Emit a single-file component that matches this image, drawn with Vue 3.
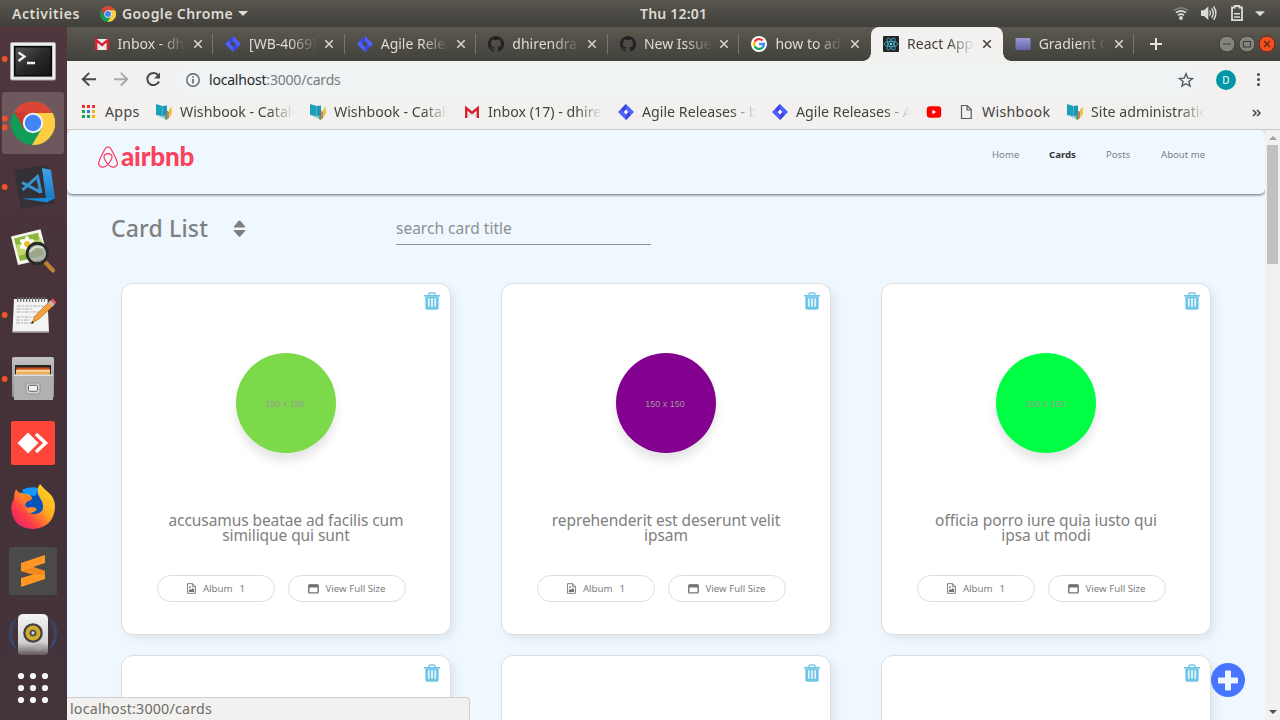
<script setup>
const tabs = [
  { title: 'Inbox - dhirendra', icon: 'gmail' },
  { title: '[WB-4069] Cards', icon: 'jira-tab' },
  { title: 'Agile Releases', icon: 'jira-tab' },
  { title: 'dhirendra/app', icon: 'github' },
  { title: 'New Issue ·', icon: 'github' },
  { title: 'how to add', icon: 'google' },
  { title: 'React App', icon: 'react', active: true },
  { title: 'Gradient Colors', icon: 'gradient' },
]
const bookmarks = [
  { title: 'Apps', icon: 'apps', size: 'apps' },
  { title: 'Wishbook - Catalog', icon: 'wish', size: 'wide' },
  { title: 'Wishbook - Catalog', icon: 'wish', size: 'wide' },
  { title: 'Inbox (17) - dhirendra', icon: 'gmail', size: 'wide' },
  { title: 'Agile Releases - board', icon: 'jira', size: 'wide' },
  { title: 'Agile Releases - Agile', icon: 'jira', size: 'wide' },
  { title: '', icon: 'youtube', size: 'tiny' },
  { title: 'Wishbook', icon: 'file', size: 'mid' },
  { title: 'Site administration', icon: 'wish', size: 'last' },
]
const links = [
  { label: 'Home', cls: 'home' },
  { label: 'Cards', cls: 'current' },
  { label: 'Posts', cls: 'posts' },
  { label: 'About me', cls: 'about' },
]
const cards = [
  { color: '#7bd94a', lines: ['accusamus beatae ad facilis cum', 'similique qui sunt'] },
  { color: '#84008f', lines: ['reprehenderit est deserunt velit', 'ipsam'] },
  { color: '#00ff44', lines: ['officia porro iure quia iusto qui', 'ipsa ut modi'] },
  { color: '#fff', lines: [] },
  { color: '#fff', lines: [] },
  { color: '#fff', lines: [] },
]
const dots = [9, 21, 33]
</script>

<template>
  <div class="desktop">
    <svg class="defs" aria-hidden="true">
      <defs>
        <linearGradient id="steel" x2="0" y2="1"><stop stop-color="#c3c3c3" /><stop offset="1" stop-color="#8e8e8e" /></linearGradient>
        <linearGradient id="screen" x2="1" y2="1"><stop stop-color="#555" /><stop offset=".5" stop-color="#2a2a2a" /><stop offset="1" stop-color="#151515" /></linearGradient>
        <linearGradient id="fox" x1="1" y1="0" x2="0" y2="1"><stop stop-color="#ffe52b" /><stop offset=".4" stop-color="#ffac20" /><stop offset=".7" stop-color="#ff3d45" /><stop offset="1" stop-color="#e31587" /></linearGradient>
        <linearGradient id="speaker" x2="0" y2="1"><stop stop-color="#f5f5f5" /><stop offset=".7" stop-color="#d2d0d0" /><stop offset="1" stop-color="#62565a" /></linearGradient>
        <linearGradient id="lilac" x2="0" y2="1"><stop stop-color="#9a9ad2" /><stop offset="1" stop-color="#6265a8" /></linearGradient>
        <linearGradient id="vs" x2="0" y2="1"><stop stop-color="#3da5ec" /><stop offset="1" stop-color="#1674bd" /></linearGradient>
        <symbol id="chrome" viewBox="0 0 44 44">
          <circle cx="22" cy="22" r="22" fill="#109d58" />
          <path d="M22 22 3 11A22 22 0 0 1 41.5 12H22z" fill="#db4437" />
          <path d="M22 12h19.7A22 22 0 0 1 21 44l10-17z" fill="#ffcd40" />
          <path d="M3 11 13 28 22 12z" fill="#c93c2f" />
          <circle cx="22" cy="22" r="10.2" fill="#f1f1f1" /><circle cx="22" cy="22" r="8.2" fill="#4285f4" />
        </symbol>
        <symbol id="gmail" viewBox="0 0 16 16"><path d="M1 3h14v11H1z" fill="#eee" /><path d="M3 13 8 8l5 5" stroke="#ccc" fill="none" /><path d="M2.2 14V4L8 9l5.800-5v10" fill="none" stroke="#d8232f" stroke-width="2.4" /></symbol>
        <symbol id="jira" viewBox="0 0 16 16"><path d="M8 0 16 8 8 16 0 8z" fill="#4c5fff" /><path d="M8 0v6L5.500 8 3.200 5z" fill="#3f45d8" /><path d="M8 16v-6l2.500-2 2.300 3z" fill="#3f45d8" /><path d="M8 5.600 10.400 8 8 10.400 5.600 8z" fill="#f2f1f0" /></symbol>
        <symbol id="jira-tab" viewBox="0 0 16 16"><path d="M8 0 16 8 8 16 0 8z" fill="#4c5fff" /><path d="M8 0v6L5.500 8 3.200 5z" fill="#3f45d8" /><path d="M8 16v-6l2.500-2 2.300 3z" fill="#3f45d8" /><path d="M8 5.300 10.700 8 8 10.700 5.300 8z" fill="#4a4944" /></symbol>
        <symbol id="github" viewBox="0 0 16 16"><path fill="#222" d="M8 0C3.58 0 0 3.58 0 8c0 3.54 2.29 6.53 5.47 7.59.4.07.55-.17.55-.38v-1.49c-2.01.37-2.53-.49-2.69-.94-.09-.23-.48-.94-.82-1.13-.28-.15-.68-.52-.01-.53.63-.01 1.08.58 1.23.82.72 1.21 1.87.87 2.33.66.07-.52.28-.87.51-1.07-1.78-.2-3.64-.89-3.64-3.95 0-.87.31-1.59.82-2.15-.08-.2-.36-1.02.08-2.12 0 0 .67-.21 2.2.82A7.7 7.7 0 0 1 8 3.86c.68 0 1.36.09 2 .27 1.53-1.04 2.2-.82 2.2-.82.44 1.1.16 1.92.08 2.12.51.56.82 1.27.82 2.15 0 3.07-1.87 3.75-3.65 3.95.29.25.54.73.54 1.48v2.2c0 .21.15.46.55.38A8 8 0 0 0 16 8c0-4.42-3.58-8-8-8z" /></symbol>
        <symbol id="google" viewBox="0 0 16 16"><circle cx="8" cy="8" r="8" fill="#fff" /><g fill="none" stroke-width="2.3"><path d="M11.6 4.5A5 5 0 0 0 3.7 5.6" stroke="#ea2d3b" /><path d="M3.7 5.6a5 5 0 0 0 0 4.8" stroke="#fbbc05" /><path d="M3.7 10.4a5 5 0 0 0 7.6 1.3" stroke="#0fae5b" /><path d="M11.3 11.7A5 5 0 0 0 13 8H8" stroke="#4285f4" /></g></symbol>
        <symbol id="react" viewBox="0 0 16 16"><rect width="16" height="16" rx="1" fill="#222" /><g fill="none" stroke="#45bcd8" stroke-width=".8"><ellipse cx="8" cy="8" rx="6.8" ry="2.6" /><ellipse cx="8" cy="8" rx="6.8" ry="2.6" transform="rotate(60 8 8)" /><ellipse cx="8" cy="8" rx="6.8" ry="2.6" transform="rotate(120 8 8)" /></g><circle cx="8" cy="8" r="1.3" fill="#61dafb" /></symbol>
        <symbol id="gradient" viewBox="0 0 16 16"><rect x=".5" y="2" width="15" height="12" rx="1" fill="url(#lilac)" /></symbol>
        <symbol id="apps" viewBox="0 0 16 16"><g><path fill="#f02b3a" d="M1 1h3v3H1zM6 1h3v3H6zM11 1h3v3h-3z" /><path fill="#13a75b" d="M1 6h3v3H1zM1 11h3v3H1z" /><path fill="#3c6ff7" d="M6 6h3v3H6z" /><path fill="#13a75b" d="M6 11h3v3H6z" /><path fill="#ffb400" d="M11 6h3v3h-3zM11 11h3v3h-3z" /></g></symbol>
        <symbol id="wish" viewBox="0 0 16 16"><path d="M0 0 6.500 2v10.500L0 11z" fill="#1aa0bb" /><path d="M6.500 2 11 1.500V11l-4.500 2z" fill="#2396b2" /><path d="M1.500 11.500 8.500 12 10 15.500z" fill="#8fcbd9" /><path d="M11 6.500 13 8v6l-2.500 2z" fill="#cc7b64" /><path d="M13 6l2.500-3.500L16 9l-2.500 5z" fill="#e6c12e" /><path d="M9 10.500h2V16L9 15z" fill="#49a265" /></symbol>
        <symbol id="youtube" viewBox="0 0 16 16"><rect x=".8" y="2.2" width="14.4" height="11.6" rx="3" fill="#f00" /><path d="M6.4 5.8v4.4L10.2 8z" fill="#fff" /></symbol>
        <symbol id="file" viewBox="0 0 16 16"><path d="M3.5 1.5h5.7l4 4v9H3.5zM9 1.5V6h4.2" fill="none" stroke="#5b5b5b" stroke-width="1.2" /></symbol>
        <symbol id="trash" viewBox="0 0 16 18"><path d="M5 3V2Q5 1 6 1h4q1 0 1 1v1" fill="none" stroke="#7ac8e8" stroke-width="1.4" /><path d="M0 3h16v1.6H0z" fill="#6fc3e5" /><path d="M1.300 4.500h13.400V16q0 1.800-1.800 1.800H3.100q-1.800 0-1.800-1.800z" fill="#71c6e8" /><path d="M4.200 6.200h1.300v8.600H4.200zM7.300 6.200h1.400v8.600H7.300zM10.500 6.200h1.300v8.600h-1.300z" fill="#fff" /></symbol>
      </defs>
    </svg>

    <header class="topbar">
      <span class="activities">Activities</span>
      <svg class="mini"><use href="#chrome" /></svg>
      <span class="appname">Google Chrome</span>
      <i class="caret"></i>
      <span class="clock">Thu 12:01</span>
      <svg class="status" viewBox="0 0 100 27">
        <g fill="none" stroke="#dadad6" stroke-width="1.7">
          <path d="M4 10.2q7-4.8 14 0" opacity=".35" /><path d="M6 12.6q5-3.4 10 0" /><path d="M8 15.2q3-2.2 6 0" />
        </g>
        <circle cx="11" cy="18" r="1.9" fill="#dadad6" />
        <path d="M31 10.2h3l4.3-3.8v13.5L34 16h-3z" fill="#dadad6" />
        <g fill="none" stroke="#dadad6" stroke-width="1.4"><path d="M39.7 10.5q1.6 2.6 0 5.2M41.7 8.5q3.2 4.6 0 9.2M43.6 6.5q4.6 6.7 0 13.3" /></g>
        <path d="M64.7 7.5H62v12.7h10V7.5h-2.7V6h-4.6z" fill="none" stroke="#dadad6" stroke-width="1.8" />
        <path d="M64 13h6v1.5h-6zM64 16.2h6v1.5h-6z" fill="#dadad6" />
        <path d="M85 11.3h10l-5 5z" fill="#dadad6" />
      </svg>
    </header>

    <div class="workspace">
      <aside class="dock">
        <svg viewBox="0 0 67 64">
          <circle class="run" cx="4.7" cy="32" r="2.9" />
          <rect x="10.5" y="15.5" width="45" height="37.5" rx="1.5" fill="#efefef" stroke="#aaa" /><rect x="13" y="18" width="40" height="32.5" fill="#c8c8c8" />
          <rect x="14" y="19" width="38" height="30.5" fill="#090909" /><rect x="15.5" y="20.5" width="35" height="27.5" fill="url(#screen)" />
          <path d="m18.5 25.5 6 4-6 4.5M27 36h8" fill="none" stroke="#eee" stroke-width="2.3" />
        </svg>
        <svg viewBox="0 0 67 64">
          <rect x="2" y="1" width="62" height="62" rx="3" fill="#6e585e" />
          <circle class="run" cx="4.7" cy="27.6" r="2.9" /><circle class="run" cx="4.7" cy="36.4" r="2.9" />
          <use href="#chrome" x="11" y="10" width="44" height="44" />
        </svg>
        <svg viewBox="0 0 67 64">
          <circle class="run" cx="4.7" cy="32" r="2.9" />
          <path d="m14 15.500 33-5.800 7 38.500-33 5.600z" fill="#343136" />
          <path d="m42 13 9 2 4 28.500-8.500 3.800z" fill="url(#vs)" /><path d="m21 43.500 25.500 3.800 7-4.500-9 .3z" fill="#1b88d8" />
          <path d="m22 27.500 18.500 9.700M22.500 35 37.500 21.500 41 38" fill="none" stroke="#3793d2" stroke-width="3" />
        </svg>
        <svg viewBox="0 0 67 64">
          <path d="m11 17.5 29.5-7.3 7.5 29-30 6.8z" fill="#f5f5ec" /><path d="m14 19.5 24-5.8 5.8 22.5L20 42z" fill="#8db63d" />
          <path d="m16 26 25-6 2 9-24 8z" fill="#bfda69" />
          <g fill="#fff"><ellipse cx="27" cy="25" rx="3" ry="8" /><ellipse cx="27" cy="25" rx="3" ry="8" transform="rotate(60 27 25)" /><ellipse cx="27" cy="25" rx="3" ry="8" transform="rotate(120 27 25)" /></g><circle cx="27" cy="25" r="3" fill="#f0bd28" />
          <path d="m45 43 8 8.5" stroke="#bd8230" stroke-width="4.2" stroke-linecap="round" />
          <circle cx="37.3" cy="34.5" r="10.2" fill="#9da39a" fill-opacity=".8" stroke="#292b29" stroke-width="2.9" /><path d="M30 33q5-8 13-4" fill="none" stroke="#d9ddd6" stroke-width="2" />
        </svg>
        <svg viewBox="0 0 67 64">
          <circle class="run" cx="4.7" cy="32" r="2.9" />
          <path d="M14 16h33.500l1.500 33H12.500z" fill="#f4f4f2" /><path d="M12.500 48H49v1.700H12.500z" fill="#aaa" />
          <path d="M17 16.500h28" stroke="#6f6f6f" stroke-width="5" stroke-dasharray="1.3 1.7" />
          <path d="M17 23h27M16.500 26h16M16.500 29h23M16.500 34h18M16 37h14M16 40h16" stroke="#b0b0b0" stroke-dasharray="4 1 2 1" />
          <path d="m32 40 3-7L50 18l4 4-15 14z" fill="#f2a23b" stroke="#b2671f" stroke-width=".7" /><path d="m50 18 3-2.500 3.500 4L54 22z" fill="#ee5365" /><path d="m48.500 19.500 2-2 4 4-2 2z" fill="#bbb" /><path d="m31 41 1-3 2 2z" fill="#222" />
        </svg>
        <svg viewBox="0 0 67 64">
          <circle class="run" cx="4.7" cy="32" r="2.9" />
          <path d="M12 12q0-2 2-2h38q2 0 2 2v38H12z" fill="url(#steel)" /><path d="M15 18h36v11H15z" fill="#292522" />
          <path d="M16.500 20.500h33V29h-33z" fill="#c75524" /><path d="M16 22.500h34V28H16z" fill="#f0ac53" /><path d="M16 24h34" stroke="#fff3db" />
          <path d="M14 27.500h39V53H14z" fill="#b0b0b0" /><path d="M14 27.500h39v1.500H14z" fill="#ddd" />
          <rect x="26" y="36" width="14" height="11" rx="2" fill="#d0d0d0" stroke="#929292" /><rect x="28.500" y="38.300" width="9" height="6" rx="1" fill="#eee" stroke="#666" />
        </svg>
        <svg viewBox="0 0 67 64"><rect x="11" y="10" width="44" height="44" rx="2.5" fill="#ff4438" /><path d="m28 21.500 10.500 10.500L28 42.500 17.500 32z" fill="#fff" /><path d="m36 23 9.500 9-9.500 9" fill="none" stroke="#fff" stroke-width="3.6" /></svg>
        <svg viewBox="0 0 67 64">
          <circle cx="33" cy="31" r="18" fill="#0b6fe0" /><path d="M22 22q8-6 20 0l2 12-8 8-10-4z" fill="#0753b9" /><path d="M22 15q7-4 16-2l-3 8-9-1z" fill="#1599ff" />
          <path d="M16 14q2 4 5 4l5 1q4 0 6 4l-1 2q-5 1-6 5 1 2 3 3 4-2 8 0-1 4-8 4 8 5 14-1 3-6-2-13-5-8 0-14 4 5 9 9 6 5 6 14-1 20-21.500 22Q12.500 53 11.300 34q-.3-6 2.700-10 0-6 2-10z" fill="url(#fox)" />
          <path d="M24 19.500l8 2.500-1 3-6 1z" fill="#ff7b21" /><path d="M26 34q6-3 11 0-2 4-8 4z" fill="#ff8a2a" />
        </svg>
        <svg viewBox="0 0 67 64"><rect x="9" y="8" width="48" height="48" rx="2" fill="#4a4a4a" /><path d="m21 24 24-8v8l-12 4 12 4v8l-24 8v-9l12-3.500L21 32z" fill="#ff9724" /><path d="m33 28 12 4v4l-12-.5L21 32z" fill="#f08a20" /></svg>
        <svg viewBox="0 0 67 64">
          <g fill="none" stroke="#384b70" stroke-width="1.3"><path d="M16 16q-9 15 0 30M13 18q-7 12 0 25M50 16q9 15 0 30M53 18q7 12 0 25" /></g>
          <path d="M18 16q0-5 6-5h18q6 0 6 5v33q0 3-4 3H22q-4 0-4-3z" fill="url(#speaker)" /><circle cx="33" cy="30" r="9.8" fill="#424242" /><circle cx="33" cy="30" r="7.5" fill="#d5ac2a" /><circle cx="33" cy="30" r="3.6" fill="#555" /><circle cx="33" cy="30" r="1.4" fill="#ddd" /><circle cx="39" cy="44" r="3" fill="none" stroke="#aaa6a6" />
        </svg>
        <svg class="grid-icon" viewBox="0 0 67 42"><template v-for="y in dots" :key="y"><circle cx="21" :cy="y" r="3.1" fill="#f5f5f5" /><circle cx="33" :cy="y" r="3.1" fill="#f5f5f5" /><circle cx="45" :cy="y" r="3.1" fill="#f5f5f5" /></template></svg>
      </aside>

      <main class="browser">
        <div class="tabs">
          <div v-for="(t, i) in tabs" :key="i" class="tab" :class="{ active: t.active, clean: i === 5 }">
            <svg class="fav"><use :href="'#' + t.icon" /></svg>
            <span class="tab-title">{{ t.title }}</span>
            <svg class="close" viewBox="0 0 10 10"><path d="m1.300 1.300 7.400 7.400m0-7.400-7.400 7.400" /></svg>
          </div>
          <svg class="plus" viewBox="0 0 12 12"><path d="M6 0v12M0 6h12" /></svg>
          <svg class="controls" viewBox="0 0 60 20">
            <circle cx="10" cy="10" r="8" fill="#85847c" stroke="#3b3a36" /><path d="M6 10h8" stroke="#3d3c37" />
            <circle cx="30" cy="10" r="8" fill="#85847c" stroke="#3b3a36" /><rect x="26.5" y="7.5" width="7" height="5.5" fill="none" stroke="#3d3c37" />
            <circle cx="50" cy="10" r="8" fill="#f2511f" stroke="#5a2a1b" /><path d="m47 7 6 6m0-6-6 6" stroke="#5b2311" stroke-width="1.3" />
          </svg>
        </div>

        <div class="toolbar">
          <svg class="nav-icons" viewBox="0 0 108 37" fill="none" stroke-width="2">
            <path d="M29 18.200H16m6.200-6.300L15.800 18.200l6.400 6.300" stroke="#4a4a4a" />
            <path d="M47 18.200h13m-6.200-6.300 6.400 6.300-6.400 6.300" stroke="#a9a9a8" />
            <path d="M91.300 14.300A6.100 6.100 0 1 0 92 20.500" stroke="#4a4a4a" /><path d="M93 11.500v6h-6z" fill="#4a4a4a" />
          </svg>
          <div class="omnibox">
            <svg class="info" viewBox="0 0 14 14"><circle cx="7" cy="7" r="6.2" fill="none" stroke="#5f6368" stroke-width="1.4" /><path d="M6.200 6h1.600v4.500H6.200zM6.200 3.300h1.600v1.500H6.200z" fill="#5f6368" /></svg>
            <span class="url"><b>localhost</b>:3000/cards</span>
            <svg class="star" viewBox="0 0 16 16"><path d="m8 1.800 1.800 4.300 4.700.4-3.600 3 1.100 4.600L8 11.700l-4 2.400 1.100-4.600-3.600-3 4.700-.4z" fill="none" stroke="#55585c" stroke-width="1.4" /></svg>
          </div>
          <span class="avatar">D</span>
          <span class="kebab"><i></i><i></i><i></i></span>
        </div>

        <div class="bookmarks">
          <div v-for="(b, i) in bookmarks" :key="i" class="bookmark" :class="b.size"><svg class="bm-icon"><use :href="'#' + b.icon" /></svg><span>{{ b.title }}</span></div>
          <svg class="more" viewBox="0 0 10 8"><path d="m1 1 3 3-3 3M5 1l3 3-3 3" fill="none" stroke="#444" stroke-width="1.5" /></svg>
        </div>

        <div class="page">
          <section class="view">
            <nav class="site-nav">
              <svg class="belo" viewBox="0 0 20 22"><path d="M10 18.300C7.400 15.200 6 12.900 6 11.100 6 9 7.700 7.700 10 7.700s4 1.300 4 3.400c0 1.800-1.400 4.100-4 7.200zm0 0c-2.700 2.800-5 3.400-7.100 2.400C.8 19.800.2 17.900 1 15.600 1.800 13.100 5.900 5 7 3c.7-1.400 1.600-2.200 3-2.200s2.300.8 3 2.200c1.100 2 5.200 10.100 6 12.600.8 2.300.2 4.200-1.900 5.100-2.100 1-4.400.4-7.100-2.400z" fill="none" stroke="#ff385c" stroke-width="1.2" /></svg>
              <span class="wordmark">airbnb</span>
              <a v-for="l in links" :key="l.label" :class="l.cls">{{ l.label }}</a>
            </nav>
            <div class="heading">
              <h1>Card List</h1>
              <svg class="sort" viewBox="0 0 12 16"><path d="M1.200 7Q0 7 .7 6L5 1q1-1 2 0l4.300 5q.7 1-.5 1zM1.200 9.400Q0 9.400.7 10.400L5 15.400q1 .8 2 0l4.300-5q.7-1-.5-1z" fill="#7f7f7f" /></svg>
              <div class="search">search card title</div>
            </div>
            <div class="cards">
              <article v-for="(c, i) in cards" :key="i" class="card">
                <svg class="trash"><use href="#trash" /></svg>
                <template v-if="c.lines.length">
                  <div class="photo" :style="{ background: c.color }">150 x 150</div>
                  <p><span v-for="line in c.lines" :key="line">{{ line }}</span></p>
                  <div class="actions">
                    <button><svg class="glyph" viewBox="0 0 10 12"><path d="M.6.6h5.600l3.200 3.200v7.600H.6zM6 .6V4h3.400" fill="none" stroke="#777" /><path d="m2 10 0-2 1.500-1.500L4.500 7.500 6.500 5.500 8 7v3z" fill="#777" /><circle cx="3.300" cy="4.600" r="1" fill="#777" /></svg><span class="album">Album</span><span>1</span></button>
                    <button><svg class="glyph window" viewBox="0 0 11 10"><rect x=".8" y=".9" width="9.400" height="8" rx=".8" fill="none" stroke="#747474" stroke-width="1.400" /><path d="M.8.5h9.400v3H.8z" fill="#747474" /></svg><span class="full">View Full Size</span></button>
                  </div>
                </template>
              </article>
            </div>
          </section>
          <div class="scrollbar"><i class="up"></i><div class="thumb"></div><i class="down"></i></div>
          <svg class="fab" viewBox="0 0 34 34"><circle cx="17" cy="17" r="17" fill="#4775ff" /><path d="M14 8.500q0-1 1-1h4q1 0 1 1V14.500h6q1 0 1 1v4q0 1-1 1h-6v6q0 1-1 1h-4q-1 0-1-1v-6H8q-1 0-1-1v-4q0-1 1-1h6z" fill="#f0f8ff" /></svg>
          <div class="status-url">localhost:3000/cards</div>
        </div>
      </main>
    </div>
  </div>
</template>

<style>
body { margin: 0; overflow: hidden; }
</style>

<style scoped>
* { box-sizing: border-box; }
.desktop { position: relative; width: 1280px; height: 720px; display: flex; flex-direction: column; font-family: "Noto Sans", "Open Sans", sans-serif; overflow: hidden; background: #46323a; }
.defs { position: absolute; width: 0; height: 0; }
svg { display: block; flex: none; }
span, a { white-space: nowrap; }
.topbar { height: 27px; flex: none; display: flex; align-items: center; position: relative; padding-left: 12px; background: linear-gradient(#59564f, #403f3a); color: #dfdbd2; font-size: 14px; font-weight: 600; line-height: 27px; }
.activities { width: 88px; letter-spacing: .55px; }
.mini { width: 16px; height: 16px; margin-right: 6px; }
.appname { width: 111px; letter-spacing: .4px; }
.caret { margin-left: 5px; border: 5px solid transparent; border-top-color: #dfdbd2; border-bottom: 0; }
.clock { position: absolute; left: 640px; letter-spacing: .2px; }
.status { width: 100px; height: 27px; position: absolute; right: 10px; top: 0; }
.workspace { display: flex; flex: 1; min-height: 0; }
.dock { width: 67px; flex: none; background: linear-gradient(#50373d, #463239 45%, #43333a); }
.dock svg { width: 67px; height: 64px; }
.dock .grid-icon { height: 42px; }
.run { fill: #ef5425; }
.browser { width: 1213px; display: flex; flex-direction: column; }
.tabs { height: 34px; flex: none; display: flex; align-items: center; padding-left: 14.500px; background: linear-gradient(#5b594f, #42413c); color: #dedcd5; }
.tab { width: 131.600px; height: 34px; display: flex; align-items: center; padding-left: 12px; position: relative; }
.tab:not(.active):not(.clean)::after { content: ''; position: absolute; right: 0; top: 7px; height: 20px; border-right: 1px solid #77766e; }
.fav { width: 16px; height: 16px; margin-right: 8px; }
.tab-title { width: 68px; overflow: hidden; font-size: 14px; line-height: 24px; margin-right: 7px; -webkit-mask-image: linear-gradient(90deg, #000 60%, transparent); mask-image: linear-gradient(90deg, #000 60%, transparent); }
.close { width: 10px; height: 10px; fill: none; stroke: #d5d4ce; stroke-width: 1.600; }
.active { background: #f2f1f0; border-radius: 8px 8px 0 0; color: #44413b; }
.active::before, .active::after { content: ''; position: absolute; bottom: 0; width: 8px; height: 8px; }
.active::before { left: -8px; background: radial-gradient(circle at 0 0, transparent 7.500px, #f2f1f0 8px); }
.active::after { right: -8px; background: radial-gradient(circle at 100% 0, transparent 7.500px, #f2f1f0 8px); }
.active .close { stroke: #44413b; }
.plus { width: 12px; height: 12px; margin-left: 15.500px; fill: none; stroke: #e8e6de; stroke-width: 2; }
.controls { width: 60px; height: 20px; margin-left: 55px; }
.toolbar { height: 37px; flex: none; display: flex; align-items: center; background: #f2f1f0; }
.nav-icons { width: 108px; height: 37px; }
.omnibox { width: 1029px; height: 28px; border-radius: 14px; background: #eff3f4; display: flex; align-items: center; padding: 0 10px 0 11px; }
.info { width: 14px; height: 14px; margin-right: 9px; }
.url { flex: 1; color: #777b7e; font-size: 14px; line-height: 24px; letter-spacing: -.2px; }
.url b { font-weight: 400; color: #272a2c; }
.star { width: 16px; height: 16px; }
.avatar { width: 20px; height: 20px; margin-left: 12px; border-radius: 50%; background: #0097a7; color: #fff; font-size: 10px; line-height: 20px; text-align: center; }
.kebab { display: flex; flex-direction: column; gap: 2px; margin-left: 20.500px; }
.kebab i { width: 3px; height: 3px; border-radius: 50%; background: #4a4a4a; }
.bookmarks { height: 32px; flex: none; display: flex; align-items: center; position: relative; padding: 0 0 4px 14px; background: #f2f1f0; border-bottom: 1px solid #c9c8c7; color: #46443f; font-size: 14.200px; }
.bookmark { display: flex; align-items: center; width: 154px; }
.bm-icon { width: 16px; height: 16px; margin-right: 8px; }
.bookmark span { width: 114px; overflow: hidden; line-height: 24px; -webkit-mask-image: linear-gradient(90deg, #000 78%, transparent); mask-image: linear-gradient(90deg, #000 78%, transparent); }
.bookmark.apps { width: 75px; }
.bookmark.apps span, .bookmark.mid span { -webkit-mask: none; mask: none; letter-spacing: .3px; }
.bookmark.tiny { width: 32px; margin-left: 0; }
.bookmark.mid { width: 109px; }
.more { position: absolute; right: 18px; top: 11px; width: 10px; height: 8px; }
.page { position: relative; flex: 1; display: flex; min-height: 0; background: #f0f8ff; overflow: hidden; }
.view { width: 1198px; flex: none; }
.site-nav { height: 64px; display: flex; align-items: flex-start; padding-left: 31px; border-radius: 5px; background: #f0f8ff; box-shadow: 0 1px 3px rgba(0, 0, 0, .6); color: #7f7f7f; font-size: 9.600px; line-height: 14px; }
.belo { width: 20px; height: 22px; margin-top: 15.500px; }
.wordmark { width: 74px; margin: 9px 797px 0 3px; color: #f9425c; font: 900 26px/34px Lato, sans-serif; letter-spacing: -.2px; }
.site-nav a { margin-top: 18px; }
.home { width: 57px; }
.current { width: 57px; color: #333; font-weight: 700; }
.posts { width: 55px; }
.heading { height: 89px; display: flex; align-items: flex-start; padding-left: 44px; }
h1 { width: 122px; margin: 17px 0 0; color: #808080; font-size: 23px; font-weight: 550; line-height: 34px; letter-spacing: .15px; white-space: nowrap; }
.sort { width: 13px; height: 17px; margin-top: 26px; }
.search { width: 255px; height: 31px; margin: 20px 0 0 150px; border-bottom: 1px solid #8e9293; color: #8d9092; font-size: 15.500px; line-height: 29px; }
.cards { display: grid; grid-template-columns: repeat(3, 330px); grid-auto-rows: 352px; gap: 20px 50px; padding-left: 54px; }
.card { position: relative; display: flex; flex-direction: column; align-items: center; background: #fff; border: 1px solid #dedede; border-radius: 12px; box-shadow: 4px 4px 8px rgba(0, 0, 0, .07); }
.trash { position: absolute; right: 10px; top: 8px; width: 16px; height: 18px; }
.photo { width: 100px; height: 100px; margin-top: 69px; flex: none; border-radius: 50%; box-shadow: 0 8px 10px rgba(0, 0, 0, .1); color: #999; font: 9px/102px "Liberation Sans", sans-serif; text-align: center; padding-right: 2px; }
p { height: 62px; display: flex; flex-direction: column; align-items: center; margin: 60px 0 0; color: #808080; font-size: 15.500px; line-height: 15px; letter-spacing: -.08px; }
.actions { display: flex; gap: 13px; margin-right: 9px; }
button { width: 118px; height: 27px; display: flex; align-items: center; justify-content: center; padding: 0; border: 1px solid #ddd; border-radius: 14px; background: #fff; color: #7d7d7d; font: 9.700px "Noto Sans", sans-serif; }
.glyph { width: 9px; height: 11px; margin-right: 7px; }
.window { width: 11px; height: 10px; margin-right: 6px; }
.album { margin-right: 7px; }
.scrollbar { width: 15px; display: flex; flex-direction: column; align-items: center; background: #f1f1f1; }
.up { margin-top: 6px; border: 4px solid transparent; border-bottom-color: #a0a0a0; border-top: 0; }
.thumb { width: 11px; height: 119px; margin-top: 5px; background: #c1c1c1; }
.down { margin: auto 0 6px; border: 4px solid transparent; border-top-color: #505050; border-bottom: 0; }
.fab { position: absolute; right: 35px; top: 533px; width: 34px; height: 34px; }
.status-url { position: absolute; left: 0; bottom: 0; width: 403px; height: 23px; padding-left: 3px; background: #f2f1f0; border: 1px solid #cfcfcf; border-width: 1px 1px 0 0; border-radius: 0 4px 0 0; color: #6e6c67; font-size: 14.300px; line-height: 22px; letter-spacing: .18px; }
</style>
